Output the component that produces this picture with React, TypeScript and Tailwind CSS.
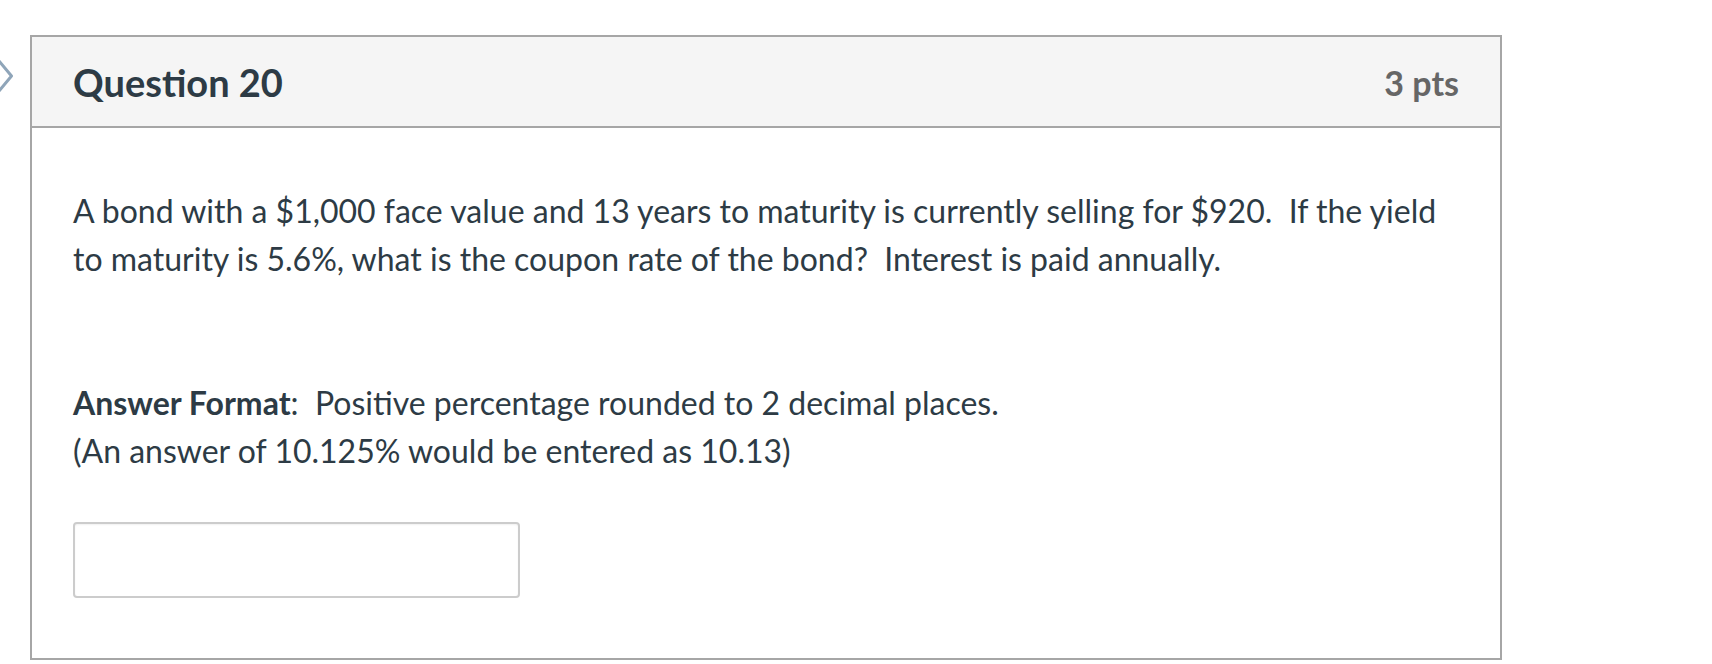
export default function App() {
  return (
    <div className="relative min-h-[664px] bg-white pt-[35px] pl-[30px] font-['Lato','Liberation_Sans',sans-serif]">
      {/* collapsed nav chevron peeking in from the left */}
      <svg className="absolute left-0 top-[55px] h-[42px] w-[16px]" viewBox="0 0 16 42" fill="none">
        <path d="M-1 6 L11.5 21 L-1 36" stroke="#8fa5b9" strokeWidth={3} strokeLinejoin="round" />
      </svg>

      <div className="w-[1472px] border-2 border-[#a6a6a6]">
        {/* Header */}
        <div className="flex h-[91px] items-center justify-between border-b-2 border-[#a6a6a6] bg-[#f5f5f5] px-[41px]">
          <h2 className="pt-[2px] text-[38px] font-bold text-[#2d3b45]">Question 20</h2>
          <span className="pt-[2px] text-[34px] font-bold text-[#666666]">3 pts</span>
        </div>

        {/* Body */}
        <div className="px-[41px] pt-[59px] pb-[60px] text-[32px] leading-[48px] text-[#2d3b45]">
          <p>
            A bond with a $1,000 face value and 13 years to maturity is currently selling for $920.&nbsp; If the yield
            to maturity is 5.6%, what is the coupon rate of the bond?&nbsp; Interest is paid annually.
          </p>
          <p className="mt-[96px]">
            <strong className="font-bold">Answer Format</strong>:&nbsp; Positive percentage rounded to 2 decimal places.
          </p>
          <p>(An answer of 10.125% would be entered as 10.13)</p>

          <input
            type="text"
            className="mt-[47px] block h-[76px] w-[447px] rounded-[4px] border-2 border-[#cccccc] bg-white shadow-[inset_0_1px_2px_rgba(0,0,0,0.06)]"
          />
        </div>
      </div>
    </div>
  );
}
